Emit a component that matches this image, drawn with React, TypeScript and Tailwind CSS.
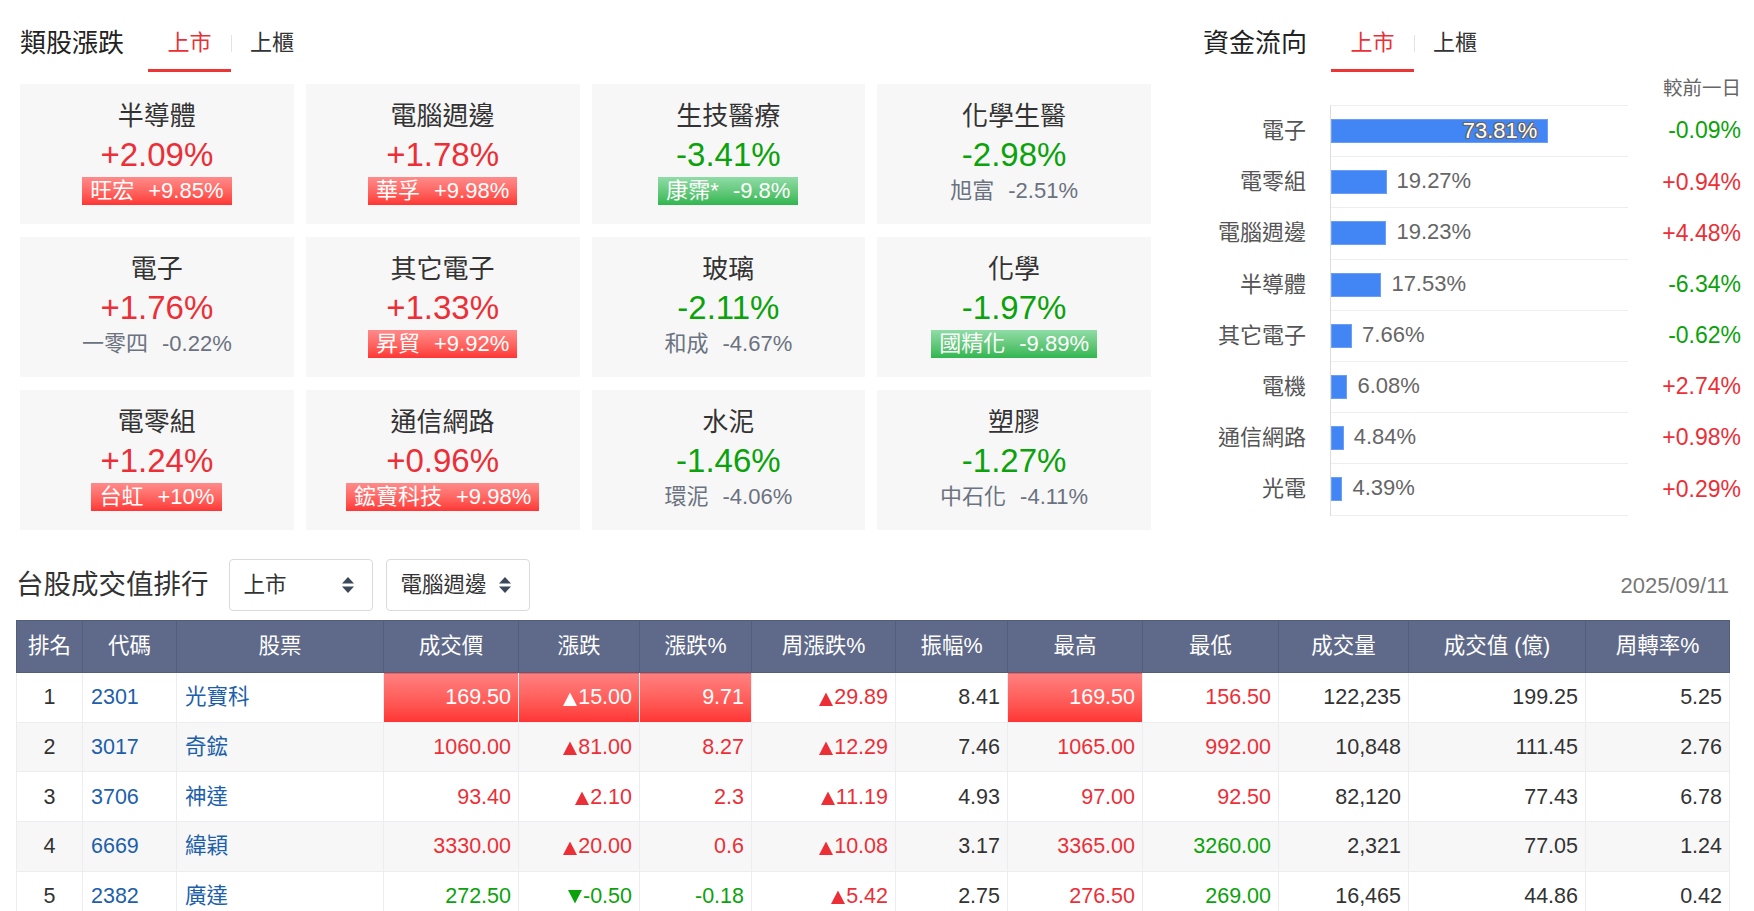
import clsx from 'clsx'

type Lead = 'up' | 'down' | 'plain'
type Tone = 'up' | 'down' | 'none'

interface Sector {
  name: string
  pct: string
  stock: string
  stockPct: string
  lead: Lead
}

interface Cell {
  v: string
  tone: Tone
  hot?: boolean
  arrow?: 'up' | 'down'
}

interface RankRow {
  rank: number
  code: string
  name: string
  cells: Cell[]
}

const RED = 'text-[#ec2f37]'
const GREEN = 'text-[#0ba20b]'

const SECTORS: Sector[] = [
  { name: '半導體', pct: '+2.09%', stock: '旺宏', stockPct: '+9.85%', lead: 'up' },
  { name: '電腦週邊', pct: '+1.78%', stock: '華孚', stockPct: '+9.98%', lead: 'up' },
  { name: '生技醫療', pct: '-3.41%', stock: '康霈*', stockPct: '-9.8%', lead: 'down' },
  { name: '化學生醫', pct: '-2.98%', stock: '旭富', stockPct: '-2.51%', lead: 'plain' },
  { name: '電子', pct: '+1.76%', stock: '一零四', stockPct: '-0.22%', lead: 'plain' },
  { name: '其它電子', pct: '+1.33%', stock: '昇貿', stockPct: '+9.92%', lead: 'up' },
  { name: '玻璃', pct: '-2.11%', stock: '和成', stockPct: '-4.67%', lead: 'plain' },
  { name: '化學', pct: '-1.97%', stock: '國精化', stockPct: '-9.89%', lead: 'down' },
  { name: '電零組', pct: '+1.24%', stock: '台虹', stockPct: '+10%', lead: 'up' },
  { name: '通信網路', pct: '+0.96%', stock: '鋐寶科技', stockPct: '+9.98%', lead: 'up' },
  { name: '水泥', pct: '-1.46%', stock: '環泥', stockPct: '-4.06%', lead: 'plain' },
  { name: '塑膠', pct: '-1.27%', stock: '中石化', stockPct: '-4.11%', lead: 'plain' },
]

const FLOWS = [
  { name: '電子', share: 73.81, diff: '-0.09%' },
  { name: '電零組', share: 19.27, diff: '+0.94%' },
  { name: '電腦週邊', share: 19.23, diff: '+4.48%' },
  { name: '半導體', share: 17.53, diff: '-6.34%' },
  { name: '其它電子', share: 7.66, diff: '-0.62%' },
  { name: '電機', share: 6.08, diff: '+2.74%' },
  { name: '通信網路', share: 4.84, diff: '+0.98%' },
  { name: '光電', share: 4.39, diff: '+0.29%' },
]

const up = (v: string, extra: Partial<Cell> = {}): Cell => ({ v, tone: 'up', ...extra })
const down = (v: string, extra: Partial<Cell> = {}): Cell => ({ v, tone: 'down', ...extra })
const flat = (v: string): Cell => ({ v, tone: 'none' })

const ROWS: RankRow[] = [
  {
    rank: 1, code: '2301', name: '光寶科',
    cells: [
      up('169.50', { hot: true }), up('15.00', { hot: true, arrow: 'up' }), up('9.71', { hot: true }),
      up('29.89', { arrow: 'up' }), flat('8.41'), up('169.50', { hot: true }), up('156.50'),
      flat('122,235'), flat('199.25'), flat('5.25'),
    ],
  },
  {
    rank: 2, code: '3017', name: '奇鋐',
    cells: [
      up('1060.00'), up('81.00', { arrow: 'up' }), up('8.27'), up('12.29', { arrow: 'up' }), flat('7.46'),
      up('1065.00'), up('992.00'), flat('10,848'), flat('111.45'), flat('2.76'),
    ],
  },
  {
    rank: 3, code: '3706', name: '神達',
    cells: [
      up('93.40'), up('2.10', { arrow: 'up' }), up('2.3'), up('11.19', { arrow: 'up' }), flat('4.93'),
      up('97.00'), up('92.50'), flat('82,120'), flat('77.43'), flat('6.78'),
    ],
  },
  {
    rank: 4, code: '6669', name: '緯穎',
    cells: [
      up('3330.00'), up('20.00', { arrow: 'up' }), up('0.6'), up('10.08', { arrow: 'up' }), flat('3.17'),
      up('3365.00'), down('3260.00'), flat('2,321'), flat('77.05'), flat('1.24'),
    ],
  },
  {
    rank: 5, code: '2382', name: '廣達',
    cells: [
      down('272.50'), down('-0.50', { arrow: 'down' }), down('-0.18'), up('5.42', { arrow: 'up' }), flat('2.75'),
      up('276.50'), down('269.00'), flat('16,465'), flat('44.86'), flat('0.42'),
    ],
  },
]

const HEADERS = ['排名', '代碼', '股票', '成交價', '漲跌', '漲跌%', '周漲跌%', '振幅%', '最高', '最低', '成交量', '成交值 (億)', '周轉率%']
const COL_WIDTHS = [
  'w-[66px]', 'w-[94px]', 'w-[207px]', 'w-[135px]', 'w-[121px]', 'w-[112px]', 'w-[144px]',
  'w-[112px]', 'w-[135px]', 'w-[136px]', 'w-[130px]', 'w-[177px]', 'w-[144px]',
]

function PanelHeader({ title }: { title: string }) {
  return (
    <div className="flex items-start pt-[27px]">
      <h2 className="w-[128px] text-[26px] leading-[32px] text-[#222]">{title}</h2>
      <div className="w-[83px] border-b-[3px] border-[#ee3535] pb-[10px] text-center text-[22px] leading-[32px] text-[#ec2f37]">
        上市
      </div>
      <div className="mt-[8px] h-[17px] w-px bg-[#e3e3e3]" />
      <div className="w-[80px] pb-[10px] text-center text-[22px] leading-[32px] text-[#333]">上櫃</div>
    </div>
  )
}

function SectorCard({ s }: { s: Sector }) {
  const rising = s.pct.startsWith('+')
  return (
    <div className="flex h-[140px] flex-col items-center bg-[#f7f7f7] pt-[17px]">
      <div className="h-[30px] text-[26px] leading-[30px] text-[#333]">{s.name}</div>
      <div className={clsx('mt-[4px] text-[33px] leading-[40px]', rising ? RED : GREEN)}>{s.pct}</div>
      <div
        className={clsx(
          'mt-[2px] flex h-[28px] items-center px-2 text-[22px] leading-none',
          s.lead === 'up' && 'bg-linear-to-b from-[#ff8a8a] to-[#ff3434] text-white',
          s.lead === 'down' && 'bg-linear-to-b from-[#8fdca6] to-[#2fb650] text-white',
          s.lead === 'plain' && 'text-[#6b7280]',
        )}
      >
        <span>{s.stock}</span>
        <span className="ml-[14px]">{s.stockPct}</span>
      </div>
    </div>
  )
}

function FundFlow() {
  return (
    <div>
      <div className="mt-[5px] text-right text-[19.5px] leading-[22px] text-[#666]">較前一日</div>
      <div className="mt-[6px] flex">
        <div className="w-[127px] pr-[24px]">
          {FLOWS.map((f) => (
            <div key={f.name} className="flex h-[51.2px] items-center justify-end text-[22px] text-[#555]">
              {f.name}
            </div>
          ))}
        </div>
        <div className="w-[298px] border-t border-l border-t-[#eeeeee] border-l-[#dcdcdc]">
          {FLOWS.map((f, i) => (
            <div key={f.name} className="flex h-[51.2px] items-center border-b border-[#eeeeee]">
              <div
                className="flex h-[24px] items-center justify-end border border-[#6d9ef5] bg-[#4285f4]"
                style={{ width: `${f.share * 2.966 - 1.6}px` }}
              >
                {i === 0 && (
                  <span className="mr-[10px] text-[22px] leading-none text-white [text-shadow:-1px_-1px_0_#666,1px_-1px_0_#666,-1px_1px_0_#666,1px_1px_0_#666,0_1px_0_#666,0_-1px_0_#666,1px_0_0_#666,-1px_0_0_#666]">
                    {f.share.toFixed(2)}%
                  </span>
                )}
              </div>
              {i > 0 && (
                <span className="ml-[10px] -translate-y-[1px] text-[22px] leading-none text-[#666]">
                  {f.share.toFixed(2)}%
                </span>
              )}
            </div>
          ))}
        </div>
        <div className="flex-1">
          {FLOWS.map((f) => (
            <div
              key={f.name}
              className={clsx('flex h-[51.2px] items-center justify-end text-[23px]', f.diff.startsWith('+') ? RED : GREEN)}
            >
              {f.diff}
            </div>
          ))}
        </div>
      </div>
    </div>
  )
}

function Tri({ dir }: { dir: 'up' | 'down' }) {
  return (
    <svg viewBox="0 0 14 14" className="mr-[1px] inline-block h-[14px] w-[14px] fill-current">
      {dir === 'up' ? <path d="M7 0.5 14 14H0z" /> : <path d="M0 0h14L7 13.5z" />}
    </svg>
  )
}

function SelectBox({ label }: { label: string }) {
  return (
    <div className="flex h-[52px] w-[144px] items-center justify-between rounded-[4px] border border-[#dadada] pr-[18px] pl-[14px] text-[21.5px] text-[#333]">
      <span>{label}</span>
      <svg viewBox="0 0 12 16" className="h-[16px] w-[12px] fill-[#3b4859]">
        <path d="M6 0 12 6.5H0z" />
        <path d="M0 9.5h12L6 16z" />
      </svg>
    </div>
  )
}

function toneClass(c: Cell) {
  if (c.hot) return 'bg-linear-to-b from-[#ff8080] to-[#ff3333] text-white'
  if (c.tone === 'up') return RED
  if (c.tone === 'down') return GREEN
  return 'text-[#333]'
}

function RankingTable() {
  return (
    <table className="w-[1713px] table-fixed border-collapse text-[21.5px]">
      <colgroup>
        {COL_WIDTHS.map((w, i) => (
          <col key={i} className={w} />
        ))}
      </colgroup>
      <thead>
        <tr className="h-[52px] bg-[#5f6a8a] text-white">
          {HEADERS.map((h) => (
            <th key={h} className="border border-[#535d7c] font-normal">
              {h}
            </th>
          ))}
        </tr>
      </thead>
      <tbody>
        {ROWS.map((r, ri) => (
          <tr key={r.code} className={clsx('h-[49.7px]', ri % 2 === 1 ? 'bg-[#f7f7f7]' : 'bg-white')}>
            <td className="border border-[#ebedf0] text-center text-[#333]">{r.rank}</td>
            <td className="border border-[#ebedf0] pl-[8px] text-[#1d5fab]">{r.code}</td>
            <td className="border border-[#ebedf0] pl-[8px] text-[#1d5fab]">{r.name}</td>
            {r.cells.map((c, ci) => (
              <td key={ci} className={clsx('border border-[#ebedf0] pr-[7px] text-right', toneClass(c))}>
                {c.arrow && <Tri dir={c.arrow} />}
                {c.v}
              </td>
            ))}
          </tr>
        ))}
      </tbody>
    </table>
  )
}

export default function App() {
  return (
    <div className="min-h-screen w-[1754px] bg-white font-['Liberation_Sans','Noto_Sans_CJK_TC',sans-serif] text-[#333]">
      <div className="flex pl-[20px]">
        <section className="w-[1131px]">
          <PanelHeader title="類股漲跌" />
          <div className="mt-[12px] grid grid-cols-4 gap-x-[12px] gap-y-[13px]">
            {SECTORS.map((s) => (
              <SectorCard key={s.name} s={s} />
            ))}
          </div>
        </section>
        <section className="ml-[52px] w-[538px]">
          <PanelHeader title="資金流向" />
          <FundFlow />
        </section>
      </div>

      <section className="mt-[29px] pr-[25px] pl-[16px]">
        <div className="flex items-center">
          <h2 className="text-[27.5px] leading-[34px] text-[#333]">台股成交值排行</h2>
          <div className="ml-[20px]">
            <SelectBox label="上市" />
          </div>
          <div className="ml-[13px]">
            <SelectBox label="電腦週邊" />
          </div>
          <span className="ml-auto text-[22px] text-[#777]">2025/09/11</span>
        </div>
        <div className="mt-[9px]">
          <RankingTable />
        </div>
      </section>
    </div>
  )
}
